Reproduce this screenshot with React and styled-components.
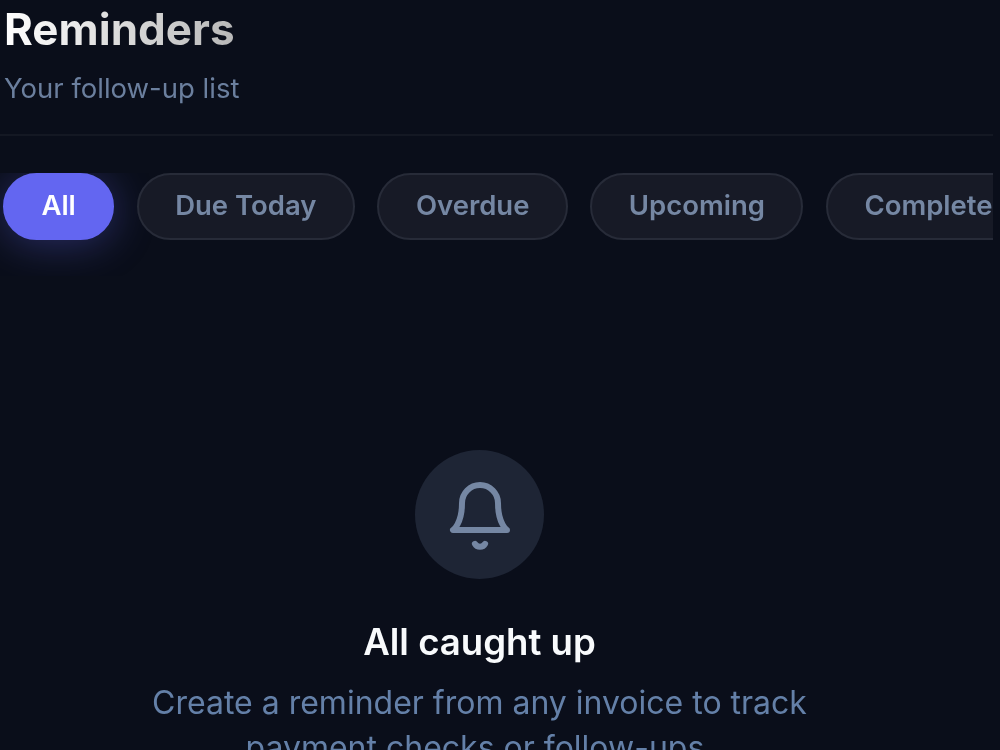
import React from "react";
import styled, { createGlobalStyle } from "styled-components";

const GlobalStyle = createGlobalStyle`
  html, body {
    margin: 0;
    padding: 0;
    height: 100%;
    background: #0a0e1a;
  }
  body {
    font-family: Inter, "Noto Sans", sans-serif;
    overflow: hidden;
  }
`;

const filters = ["All", "Due Today", "Overdue", "Upcoming", "Completed"];

const BellIcon = () => (
  <svg width="72" height="72" viewBox="0 0 24 24" fill="none" stroke="currentColor" strokeWidth="2" strokeLinecap="round" strokeLinejoin="round">
    <path d="M18 8a6 6 0 0 0-12 0c0 7-3 9-3 9h18s-3-2-3-9" />
    <path d="M10.3 21.6a1.94 1.94 0 0 0 3.4 0" />
  </svg>
);

const App = () => {
  return (
    <Page>
      <GlobalStyle />
      <Header>
        <Title>Reminders</Title>
        <Subtitle>Your follow-up list</Subtitle>
      </Header>
      <FilterBar>
        {filters.map((name, i) => (
          <FilterPill key={name} $active={i === 0}>
            {name}
          </FilterPill>
        ))}
      </FilterBar>
      <EmptyState>
        <IconCircle>
          <BellIcon />
        </IconCircle>
        <EmptyTitle>All caught up</EmptyTitle>
        <EmptyText>
          Create a reminder from any invoice to track payment checks or follow-ups.
        </EmptyText>
      </EmptyState>
    </Page>
  );
};

export default App;

const Page = styled.div`
  width: 1000px;
  height: 750px;
  overflow: hidden;
  background: #0a0e1a;
  filter: blur(0.5px);
`;

const Header = styled.header`
  width: 993px;
  height: 136px;
  box-sizing: border-box;
  padding: 5px 0 0 4px;
  border-bottom: 2px solid #141823;
`;

const Title = styled.h1`
  margin: 0;
  width: fit-content;
  font-size: 44px;
  line-height: 48px;
  font-weight: 700;
  color: transparent;
  background: linear-gradient(90deg, #ffffff, #b8b8b8);
  background-clip: text;
  -webkit-background-clip: text;
`;

const Subtitle = styled.p`
  margin: 19px 0 0;
  font-size: 27.5px;
  line-height: 32px;
  color: #6b7f9e;
`;

const FilterBar = styled.div`
  display: flex;
  gap: 22.6px;
  width: 993px;
  box-sizing: border-box;
  margin-top: 37px;
  padding: 0 0 36px 3px;
  overflow: hidden;
`;

const FilterPill = styled.button`
  flex: none;
  height: 67px;
  box-sizing: border-box;
  padding: 0 36.4px 3px;
  border-radius: 34px;
  font-family: inherit;
  font-size: 27.5px;
  font-weight: 600;
  color: ${(p) => (p.$active ? "#ffffff" : "#7587a3")};
  background: ${(p) => (p.$active ? "#6366f1" : "#171a26")};
  border: 2px solid ${(p) => (p.$active ? "#6366f1" : "#272b38")};
  box-shadow: ${(p) => (p.$active ? "0 4px 40px rgba(99, 102, 241, 0.35)" : "none")};
`;

const EmptyState = styled.section`
  display: flex;
  flex-direction: column;
  align-items: center;
  width: 959px;
  padding-top: 174px;
`;

const IconCircle = styled.div`
  display: flex;
  align-items: center;
  justify-content: center;
  width: 129px;
  height: 129px;
  border-radius: 50%;
  background: #1e2535;
  color: #7587a3;
`;

const EmptyTitle = styled.h2`
  margin: 39px 0 0;
  font-size: 36.6px;
  line-height: 48px;
  font-weight: 600;
  color: #f8fafc;
`;

const EmptyText = styled.p`
  margin: 14px 0 0;
  width: 680px;
  text-align: center;
  font-size: 32px;
  line-height: 45px;
  color: #6480a8;
`;
